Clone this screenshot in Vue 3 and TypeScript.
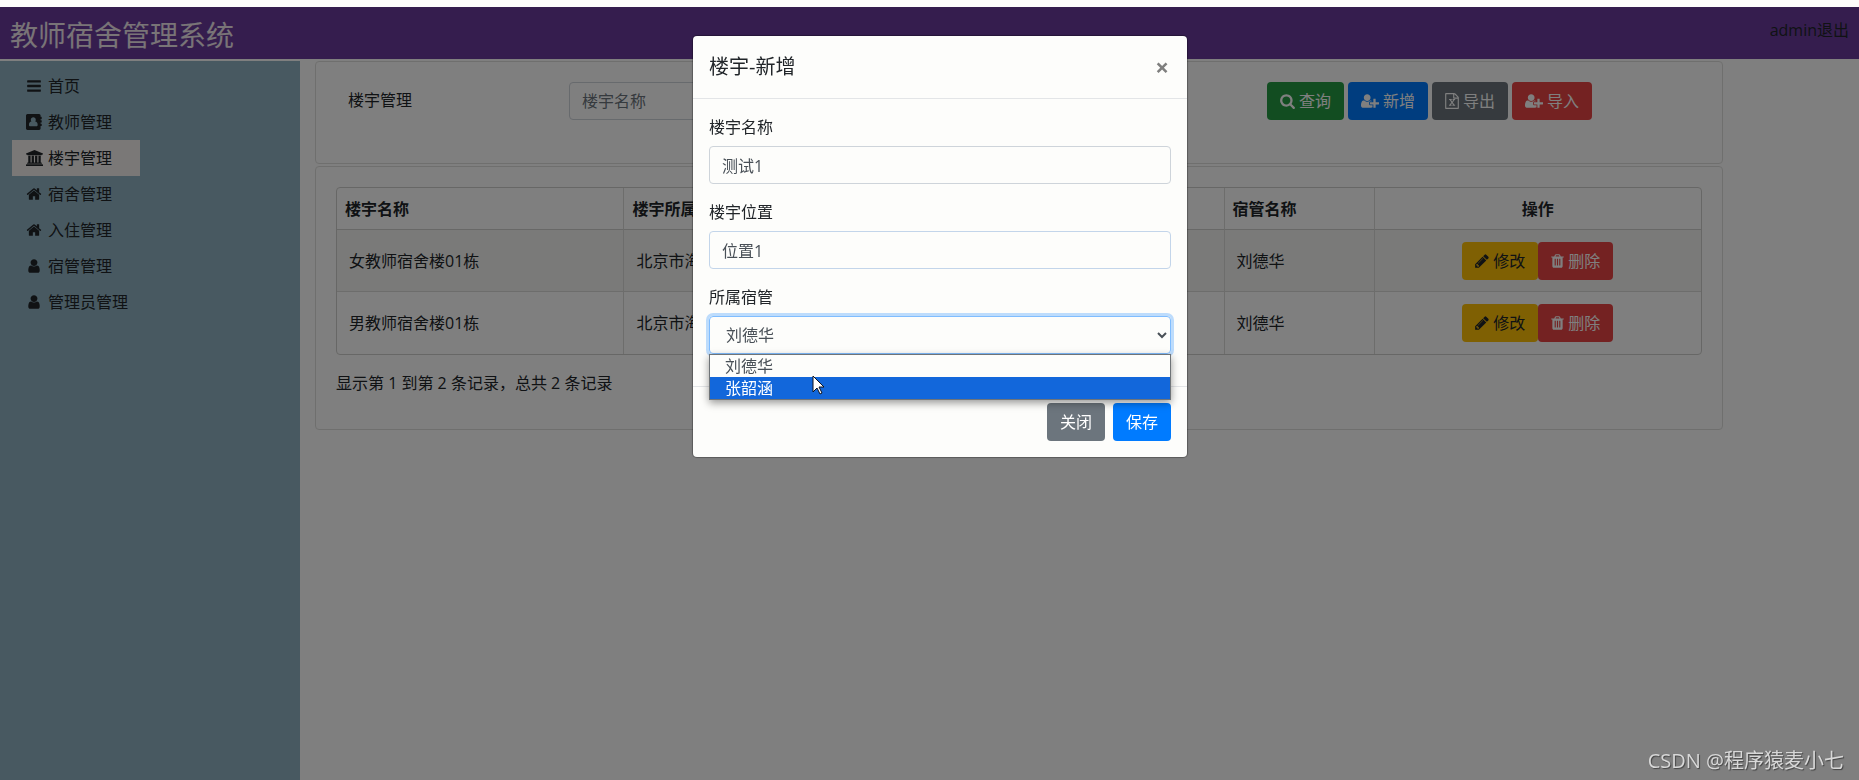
<script setup lang="ts">
import { ref } from 'vue'

interface Glyph {
  box: string
  width: number
  path: string
}

const personPath =
  'M1536 1399q0 109-62.5 187t-150.5 78h-854q-88 0-150.5-78t-62.5-187q0-85 8.5-160.5t31.5-152 58.5-131 94-89 134.5-34.5q131 128 313 128t313-128q76 0 134.5 34.5t94 89 58.5 131 31.5 152 8.5 160.5zm-256-887q0 159-112.5 271.5t-271.5 112.5-271.5-112.5-112.5-271.5 112.5-271.5 271.5-112.5 271.5 112.5 112.5 271.5z'

const glyphs: Record<string, Glyph> = {
  bars: {
    box: '0 0 1792 1792',
    width: 16,
    path: 'M1664 1344v128q0 26-19 45t-45 19h-1408q-26 0-45-19t-19-45v-128q0-26 19-45t45-19h1408q26 0 45 19t19 45zm0-512v128q0 26-19 45t-45 19h-1408q-26 0-45-19t-19-45v-128q0-26 19-45t45-19h1408q26 0 45 19t19 45zm0-512v128q0 26-19 45t-45 19h-1408q-26 0-45-19t-19-45v-128q0-26 19-45t45-19h1408q26 0 45 19t19 45z',
  },
  book: {
    box: '0 0 1792 1792',
    width: 16,
    path: 'M160 0h1312q66 0 113 47t47 113v160h96q32 0 32 32v192q0 32-32 32h-96v128h96q32 0 32 32v192q0 32-32 32h-96v128h96q32 0 32 32v192q0 32-32 32h-96v288q0 66-47 113t-113 47h-1312q-66 0-113-47t-47-113v-1472q0-66 47-113t113-47zM816 352q-116 0-197 82t-81 200q0 116 72 214-130 14-206 112t-76 278q0 120 90 120h800q90 0 90-120 0-180-76-278t-206-112q68-98 68-214 0-118-81-200t-197-82z',
  },
  bank: {
    box: '0 0 1920 1792',
    width: 17,
    path: 'M960 0l960 384v128h-128q0 26-20.5 45t-48.5 19h-1526q-28 0-48.5-19t-20.5-45h-128v-128zm-704 640h256v768h128v-768h256v768h128v-768h256v768h128v-768h256v768h59q28 0 48.5 19t20.5 45v64h-1664v-64q0-26 20.5-45t48.5-19h59v-768zm1595 960q28 0 48.5 19t20.5 45v128h-1920v-128q0-26 20.5-45t48.5-19h1782z',
  },
  home: {
    box: '0 0 1792 1792',
    width: 16,
    path: 'M1472 992v480q0 26-19 45t-45 19h-384v-384h-256v384h-384q-26 0-45-19t-19-45v-480q0-1 .5-3t.5-3l575-474 575 474q1 2 1 6zm223-69l-62 74q-8 9-21 11h-3q-13 0-21-7l-692-577-692 577q-12 8-24 7-13-2-21-11l-62-74q-8-10-7-23.5t11-21.5l719-599q32-26 76-26t76 26l244 204v-195q0-14 9-23t23-9h192q14 0 23 9t9 23v408l219 182q10 8 11 21.5t-7 23.5z',
  },
  user: { box: '0 0 1792 1792', width: 16, path: personPath },
  search: {
    box: '64 0 1664 1792',
    width: 15,
    path: 'M1216 832q0-185-131.5-316.5t-316.5-131.5-316.5 131.5-131.5 316.5 131.5 316.5 316.5 131.5 316.5-131.5 131.5-316.5zm512 832q0 52-38 90t-90 38q-54 0-90-38l-343-342q-179 124-399 124-143 0-273.5-55.5t-225-150-150-225-55.5-273.5 55.5-273.5 150-225 225-150 273.5-55.5 273.5 55.5 225 150 150 225 55.5 273.5q0 220-124 399l343 343q37 37 37 90z',
  },
  userPlus: {
    box: '0 0 2048 1792',
    width: 18,
    path: 'M704 896q-159 0-271.5-112.5t-112.5-271.5 112.5-271.5 271.5-112.5 271.5 112.5 112.5 271.5-112.5 271.5-271.5 112.5zm960 128h352q13 0 22.5 9.5t9.5 22.5v192q0 13-9.5 22.5t-22.5 9.5h-352v352q0 13-9.5 22.5t-22.5 9.5h-192q-13 0-22.5-9.5t-9.5-22.5v-352h-352q-13 0-22.5-9.5t-9.5-22.5v-192q0-13 9.5-22.5t22.5-9.5h352v-352q0-13 9.5-22.5t22.5-9.5h192q13 0 22.5 9.5t9.5 22.5v352zm-736 224q0 52 38 90t90 38h256v238q-68 50-171 50h-874q-121 0-194-69t-73-190q0-53 3.5-103.5t14-109 26.5-108.5 43-97.5 62-81 85.5-53.5 111.5-20q19 0 39 17 79 61 154.5 91.5t164.5 30.5 164.5-30.5 154.5-91.5q20-17 39-17 132 0 217 96h-223q-52 0-90 38t-38 90v192z',
  },
  excel: {
    box: '0 0 1536 1792',
    width: 14,
    path: 'M96 0h896q40 0 88 20t76 48l312 312q28 28 48 76t20 88v1152q0 40-28 68t-68 28h-1344q-40 0-68-28t-28-68v-1600q0-40 28-68t68-28zM128 128v1536h1280v-1024h-416q-40 0-68-28t-28-68v-416zM1024 136v376h376q-10-29-22-41l-313-313q-12-12-41-22zM429 1430h292v-106h-75l103-161 18-32 20 32 105 161h-77v106h305v-106h-70l-192-273 195-277h69v-107h-290v107h76l-103 159-19 33-20-33-103-159h77v-107h-303v107h70l189 273-193 277h-71z',
  },
  pencil: {
    box: '128 0 1536 1792',
    width: 14,
    path: 'M491 1536l91-91-235-235-91 91v107h128v128h107zm523-928q0-22-22-22-10 0-17 7l-542 542q-7 7-7 17 0 22 22 22 10 0 17-7l542-542q7-7 7-17zm-54-192l416 416-832 832h-416v-416zm683 96q0 53-37 90l-166 166-416-416 166-165q36-38 90-38 53 0 91 38l235 234q37 39 37 91z',
  },
  trash: {
    box: '192 0 1408 1792',
    width: 13,
    path: 'M704 1376v-704q0-14-9-23t-23-9h-64q-14 0-23 9t-9 23v704q0 14 9 23t23 9h64q14 0 23-9t9-23zm256 0v-704q0-14-9-23t-23-9h-64q-14 0-23 9t-9 23v704q0 14 9 23t23 9h64q14 0 23-9t9-23zm256 0v-704q0-14-9-23t-23-9h-64q-14 0-23 9t-9 23v704q0 14 9 23t23 9h64q14 0 23-9t9-23zm-544-992h448l-48-117q-7-9-17-11h-317q-10 2-17 11zm928 32v64q0 14-9 23t-23 9h-96v948q0 83-47 143.5t-113 60.5h-832q-66 0-113-58.5t-47-141.5v-952h-96q-14 0-23-9t-9-23v-64q0-14 9-23t23-9h309l70-167q15-37 54-63t79-26h320q40 0 79 26t54 63l70 167h309q14 0 23 9t9 23z',
  },
}

const menu = [
  { label: '首页', icon: 'bars' },
  { label: '教师管理', icon: 'book' },
  { label: '楼宇管理', icon: 'bank' },
  { label: '宿舍管理', icon: 'home' },
  { label: '入住管理', icon: 'home' },
  { label: '宿管管理', icon: 'user' },
  { label: '管理员管理', icon: 'user' },
]
const activeMenu = ref('楼宇管理')

const actions = [
  { label: '查询', icon: 'search', tone: 'green' },
  { label: '新增', icon: 'userPlus', tone: 'blue' },
  { label: '导出', icon: 'excel', tone: 'gray' },
  { label: '导入', icon: 'userPlus', tone: 'red' },
]

const rows = [
  { name: '女教师宿舍楼01栋', place: '北京市海', keeper: '刘德华' },
  { name: '男教师宿舍楼01栋', place: '北京市海', keeper: '刘德华' },
]

const keyword = ref('')
const buildingName = ref('测试1')
const buildingPlace = ref('位置1')
const keepers = ['刘德华', '张韶涵']
const keeper = ref('刘德华')
const hovered = ref('张韶涵')
const modalOpen = ref(true)
const listOpen = ref(true)

function pick(name: string): void {
  keeper.value = name
  listOpen.value = false
}
</script>

<template>
  <div class="page">
    <header class="topbar">
      <h1 class="brand">教师宿舍管理系统</h1>
      <div class="account"><span>admin</span><a href="#logout">退出</a></div>
    </header>

    <div class="shell">
      <nav class="sidebar">
        <a
          v-for="item in menu"
          :key="item.label"
          href="#"
          class="menu-item"
          :class="{ active: item.label === activeMenu }"
          @click.prevent="activeMenu = item.label"
        >
          <span class="menu-icon">
            <svg class="icon" :viewBox="glyphs[item.icon].box" :width="glyphs[item.icon].width" height="16" aria-hidden="true">
              <path fill-rule="evenodd" :d="glyphs[item.icon].path" />
            </svg>
          </span>
          {{ item.label }}
        </a>
      </nav>

      <main class="content">
        <section class="card filter">
          <label class="filter-label" for="keyword">楼宇管理</label>
          <input id="keyword" v-model="keyword" class="control filter-input" type="text" placeholder="楼宇名称" />
          <div class="actions">
            <button v-for="a in actions" :key="a.label" type="button" class="btn" :class="a.tone">
              <svg class="icon" :viewBox="glyphs[a.icon].box" :width="glyphs[a.icon].width" height="16" aria-hidden="true">
                <path fill-rule="evenodd" :d="glyphs[a.icon].path" />
              </svg>
              <span>{{ a.label }}</span>
            </button>
          </div>
        </section>

        <section class="card listing">
          <table class="grid">
            <colgroup>
              <col class="col-name" />
              <col class="col-place" />
              <col class="col-keeper" />
              <col class="col-ops" />
            </colgroup>
            <thead>
              <tr>
                <th>楼宇名称</th>
                <th>楼宇所属</th>
                <th>宿管名称</th>
                <th class="center">操作</th>
              </tr>
            </thead>
            <tbody>
              <tr v-for="row in rows" :key="row.name">
                <td>{{ row.name }}</td>
                <td>{{ row.place }}</td>
                <td>{{ row.keeper }}</td>
                <td>
                  <div class="ops">
                    <button type="button" class="btn yellow">
                      <svg class="icon" :viewBox="glyphs.pencil.box" :width="glyphs.pencil.width" height="16" aria-hidden="true">
                        <path fill-rule="evenodd" :d="glyphs.pencil.path" />
                      </svg>
                      <span>修改</span>
                    </button>
                    <button type="button" class="btn red">
                      <svg class="icon" :viewBox="glyphs.trash.box" :width="glyphs.trash.width" height="16" aria-hidden="true">
                        <path fill-rule="evenodd" :d="glyphs.trash.path" />
                      </svg>
                      <span>删除</span>
                    </button>
                  </div>
                </td>
              </tr>
            </tbody>
          </table>
          <p class="summary">显示第 1 到第 2 条记录，总共 2 条记录</p>
        </section>
      </main>
    </div>

    <div v-if="modalOpen" class="backdrop">
      <form class="modal" role="dialog" aria-labelledby="modal-title" @submit.prevent="modalOpen = false">
        <div class="modal-head">
          <h2 id="modal-title" class="modal-title">楼宇-新增</h2>
          <button type="button" class="close" aria-label="关闭" @click="modalOpen = false">×</button>
        </div>
        <div class="modal-body">
          <div class="field">
            <label for="b-name">楼宇名称</label>
            <input id="b-name" v-model="buildingName" class="control" type="text" />
          </div>
          <div class="field">
            <label for="b-place">楼宇位置</label>
            <input id="b-place" v-model="buildingPlace" class="control tinted" type="text" />
          </div>
          <div class="field">
            <label for="b-keeper">所属宿管</label>
            <div class="picker">
              <select id="b-keeper" v-model="keeper" class="control focused">
                <option v-for="k in keepers" :key="k">{{ k }}</option>
              </select>
              <ul v-if="listOpen" class="options" role="listbox" aria-label="所属宿管">
                <li
                  v-for="k in keepers"
                  :key="k"
                  role="option"
                  :aria-selected="k === keeper"
                  :class="{ hot: k === hovered }"
                  @mouseenter="hovered = k"
                  @click="pick(k)"
                >
                  {{ k }}
                </li>
              </ul>
              <svg v-if="listOpen" class="pointer" width="13" height="20" viewBox="0 0 13 20" aria-hidden="true">
                <path d="M1 1v16l4-4 3 6 2-1-3-6h5z" />
              </svg>
            </div>
          </div>
        </div>
        <div class="modal-foot">
          <button type="button" class="btn gray" @click="modalOpen = false">关闭</button>
          <button type="submit" class="btn blue">保存</button>
        </div>
      </form>
    </div>

    <div class="watermark">CSDN @程序猿麦小七</div>
  </div>
</template>

<style>
body {
  margin: 0;
  background: #fdfdfb;
}
</style>

<style scoped>
.page {
  position: relative;
  box-sizing: border-box;
  display: flex;
  flex-direction: column;
  min-height: 100vh;
  padding-top: 7px;
  color: #212529;
  font-family: 'Open Sans', 'Noto Sans CJK SC', sans-serif;
  font-size: 16px;
  line-height: 24px;
}

.page *,
.page *::before {
  box-sizing: border-box;
}

.topbar {
  display: flex;
  justify-content: space-between;
  align-items: flex-start;
  height: 52px;
  padding: 8px 10px;
  background: #6a3b9d;
}

.brand {
  margin: 0;
  color: #f2e9ee;
  font-size: 28px;
  font-weight: 400;
  line-height: 40px;
}

.account {
  padding-top: 3px;
}

.account a {
  color: inherit;
  text-decoration: none;
}

.shell {
  display: flex;
  flex: 1;
  padding-top: 2px;
  background: #ffffff;
}

.sidebar {
  display: flex;
  flex: 0 0 300px;
  flex-direction: column;
  padding: 7px 12px;
  background: #90b3c2;
}

.menu-item {
  display: flex;
  align-items: center;
  width: 128px;
  height: 36px;
  padding-left: 12px;
  color: #212529;
  text-decoration: none;
}

.menu-item.active {
  background: #f4f1ef;
}

.menu-icon {
  display: flex;
  justify-content: center;
  width: 20px;
  margin-right: 4px;
}

.icon {
  display: block;
  flex: none;
  fill: currentColor;
}

.content {
  flex: 1;
  min-width: 0;
  padding: 0 136px 0 15px;
}

.card {
  border: 1px solid #dfdfdd;
  border-radius: 4px;
}

.filter {
  display: grid;
  grid-template-columns: 221px 1fr auto;
  align-items: start;
  padding: 20px 130px 43px 32px;
}

.filter-label {
  padding-top: 6px;
}

.filter-input {
  max-width: 480px;
}

.control {
  display: block;
  width: 100%;
  height: 38px;
  padding: 6px 12px;
  border: 1px solid #ced4da;
  border-radius: 4px;
  outline: 0;
  background: transparent;
  color: #495057;
  font: inherit;
}

.control::placeholder {
  color: #6c757d;
  opacity: 1;
}

.tinted {
  border-color: #c3d5ea;
}

.focused {
  border-color: #80bdff;
  box-shadow: 0 0 0 3px rgba(0, 123, 255, 0.25);
}

.actions {
  display: flex;
  gap: 4px;
}

.btn {
  display: inline-flex;
  align-items: center;
  gap: 4px;
  height: 38px;
  padding: 0 12px;
  border: 1px solid transparent;
  border-radius: 4px;
  color: #ffffff;
  font: inherit;
  white-space: nowrap;
}

.green {
  background: #249b43;
}

.blue {
  background: #007bff;
}

.gray {
  background: #6c757d;
}

.red {
  background: #e94444;
}

.yellow {
  background: #ffc107;
  color: #212529;
}

.listing {
  margin-top: 2px;
  padding: 20px 20px 34px;
}

.grid {
  width: 100%;
  border: 1px solid #cfcfcd;
  border-radius: 4px;
  border-spacing: 0;
  table-layout: fixed;
}

.col-name {
  width: 21%;
}

.col-place {
  width: 44%;
}

.col-keeper {
  width: 11%;
}

.grid th {
  height: 42px;
  padding: 0 8px;
  border-bottom: 1px solid #d0d0ce;
  text-align: left;
  font-weight: 700;
}

.grid th.center {
  text-align: center;
}

.grid td {
  height: 62px;
  padding: 0 12px;
}

.grid th + th,
.grid td + td {
  border-left: 1px solid #dbdbd9;
}

.grid tbody tr:first-child td {
  border-bottom: 1px solid #dbdbd9;
  background: #f4f4f2;
}

.ops {
  display: flex;
  justify-content: center;
}

.summary {
  margin: 16px 0 0;
}

.backdrop {
  position: fixed;
  inset: 7px 0 0;
  display: flex;
  justify-content: center;
  align-items: flex-start;
  padding: 29px 0 0 21px;
  background: rgba(0, 0, 0, 0.5);
}

.modal {
  width: 494px;
  border-radius: 4px;
  background: #fdfdfb;
  box-shadow: 0 0 1px 1px rgba(0, 0, 0, 0.3);
}

.modal-head {
  display: flex;
  justify-content: space-between;
  align-items: center;
  height: 63px;
  padding: 0 16px;
  border-bottom: 1px solid #e3e5e7;
}

.modal-title {
  margin: 0;
  font-size: 20px;
  font-weight: 400;
  line-height: 30px;
}

.close {
  width: 18px;
  height: 24px;
  padding: 0;
  border: 0;
  background: transparent;
  color: #7f7f7e;
  font: inherit;
  font-size: 24px;
  font-weight: 700;
  line-height: 24px;
}

.modal-body {
  display: grid;
  gap: 16px;
  padding: 16px 16px 32px;
}

.field {
  display: grid;
  gap: 7px;
}

.picker {
  position: relative;
}

.options {
  position: absolute;
  z-index: 1;
  top: 100%;
  right: 0;
  left: 0;
  margin: 0;
  padding: 0;
  border: 1px solid #6f7478;
  background: #fdfdfb;
  box-shadow: 0 3px 8px rgba(0, 0, 0, 0.4);
  color: #495057;
  line-height: 22px;
  list-style: none;
}

.options li {
  padding-left: 15px;
}

.options .hot {
  background: #1267db;
  color: #ffffff;
}

.pointer {
  position: absolute;
  z-index: 2;
  top: 59px;
  left: 103px;
  fill: #ffffff;
  stroke: #10131c;
}

.modal-foot {
  display: flex;
  justify-content: flex-end;
  gap: 8px;
  padding: 16px;
  border-top: 1px solid #e3e5e7;
}

.watermark {
  position: fixed;
  right: 15px;
  bottom: 4px;
  color: #d8d8d8;
  font-size: 20px;
  line-height: 30px;
  text-shadow: 1px 1px 1px #444444;
}
</style>
